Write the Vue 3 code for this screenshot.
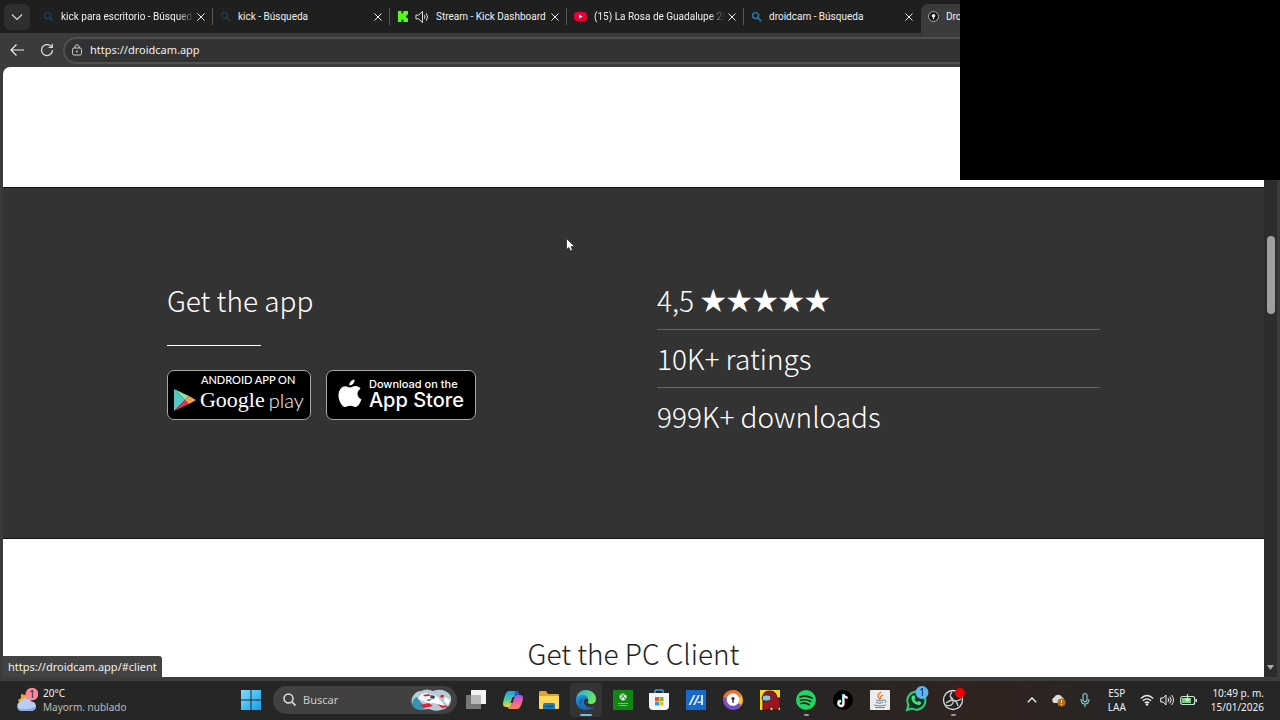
<template>
  <div class="screen">
    <!-- browser tabs -->
    <header class="tab-strip">
      <button class="tab-menu" aria-label="Tabs">
        <svg width="12" height="12" viewBox="0 0 12 12"><path d="M1 3.5 6 8.5 11 3.5" fill="none" stroke="#ddd" stroke-width="1.1" /></svg>
      </button>
      <div v-for="tab in tabs" :key="tab.title" class="tab" :class="{ active: tab.active }">
        <svg v-if="tab.icon === 'search'" class="favicon" :class="{ dim: tab.dim }" viewBox="0 0 12 12">
          <circle cx="5" cy="5" r="3.2" fill="none" stroke="#247fae" stroke-width="1.5" />
          <path d="M7.4 7.4 11 11" stroke="#247fae" stroke-width="1.7" />
        </svg>
        <svg v-else-if="tab.icon === 'kick'" class="favicon" viewBox="0 0 12 12">
          <path d="M1 0h4v3h1V2h1V0h5v4h-1v1h-1v2h1v1h1v4H7v-2H6V9H5v3H1z" fill="#53fc18" />
        </svg>
        <svg v-else-if="tab.icon === 'youtube'" class="favicon youtube" viewBox="0 0 14 12">
          <rect y="1" width="14" height="10" rx="3" fill="#e60035" />
          <path d="M5.5 3.8v4.4L9.3 6z" fill="#fff" />
        </svg>
        <svg v-else class="favicon" viewBox="0 0 12 12">
          <circle cx="6" cy="6" r="5.4" fill="#111" stroke="#bbb" />
          <circle cx="6" cy="5.2" r="2" fill="#eee" /><path d="M5.3 6h1.4v3H5.3z" fill="#eee" />
        </svg>
        <svg v-if="tab.sound" class="sound" viewBox="0 0 15 14">
          <path d="M1 5v4h3l4 4V1L4 5z" fill="none" stroke="#eee" />
          <path d="M10 5q1.500 2 0 4M12 3q3 4 0 8" fill="none" stroke="#eee" />
        </svg>
        <span class="tab-title" :class="{ fade: tab.fade }">{{ tab.title }}</span>
        <button class="tab-close" aria-label="Cerrar">
          <svg width="8" height="8" viewBox="0 0 8 8"><path d="M.5.5l7 7M7.500.5l-7 7" stroke="#eee" /></svg>
        </button>
      </div>
    </header>

    <!-- toolbar -->
    <div class="toolbar">
      <button class="tool" aria-label="Atrás">
        <svg width="14" height="12" viewBox="0 0 14 12"><path d="M14 6H1M6.500.5 1 6l5.500 5.500" fill="none" stroke="#eee" stroke-width="1.2" /></svg>
      </button>
      <button class="tool" aria-label="Actualizar">
        <svg width="14" height="14" viewBox="0 0 14 14">
          <path d="M12.500 7a5.500 5.500 0 1 1-2-4.200L12 4" fill="none" stroke="#ddd" stroke-width="1.2" />
          <path d="M12.300.8v3.700H8.500" fill="none" stroke="#ddd" stroke-width="1.2" />
        </svg>
      </button>
      <div class="address">
        <svg width="12" height="12" viewBox="0 0 12 12">
          <rect x="1.500" y="4" width="9" height="7" rx="1.500" fill="none" stroke="#ccc" />
          <path d="M3.800 4V3a2.200 2.200 0 0 1 4.400 0v1" fill="none" stroke="#ccc" />
          <circle cx="6" cy="7.500" r=".9" fill="#ccc" />
        </svg>
        <input v-model="url" type="text" aria-label="Dirección" />
      </div>
    </div>

    <!-- web page -->
    <div class="viewport">
      <main class="page">
        <section class="blank"></section>
        <section class="app-section">
          <div class="columns">
            <div class="get-app">
              <h2>Get the app</h2>
              <hr />
              <div class="badges">
                <a href="#" class="badge google">
                  <span class="badge-top">ANDROID APP ON</span>
                  <span class="google-row">
                    <svg width="22" height="24" viewBox="0 0 22 24">
                      <path d="M0 1v22l11-11z" fill="#55c8c4" />
                      <path d="M0 1l15 7-4 4z" fill="#8fe0a8" />
                      <path d="M0 23l15-7-4-4z" fill="#d8325f" />
                      <path d="M15 8l7 4-7 4-4-4z" fill="#f7a04b" />
                    </svg>
                    <span class="google-word">Google</span>
                    <span class="play-word">play</span>
                  </span>
                </a>
                <a href="#" class="badge apple">
                  <svg width="24" height="30" viewBox="0 0 24 30">
                    <path d="M16.500.5c.3 3-2.200 6-5.200 6C11 3.500 13.500 1 16.500.5z" fill="#fff" />
                    <path d="M12 8.500c1.500 0 3-1.500 5.500-1.500 2 0 4 1 5 2.700-4.500 2.800-3.700 8.800 1 10.600C22 24.500 20 28 17.500 28c-2 0-2.700-1.200-5.200-1.200S9 28 7 28C4 28 .5 22 .5 16.500.5 10.500 4 7.200 7.500 7.200c2 0 3.500 1.300 4.500 1.300z" fill="#fff" />
                  </svg>
                  <span class="apple-text">
                    <span class="apple-top">Download on the</span>
                    <span class="apple-word">App Store</span>
                  </span>
                </a>
              </div>
            </div>
            <ul class="stats">
              <li>4,5 <span class="stars">★★★★★</span></li>
              <li>10K+ ratings</li>
              <li>999K+ downloads</li>
            </ul>
          </div>
        </section>
        <section class="client">
          <h2>Get the PC Client</h2>
        </section>
      </main>
      <div class="scrollbar">
        <div class="thumb"></div>
        <svg class="down" width="7" height="5" viewBox="0 0 7 5"><path d="M0 0h7L3.500 5z" fill="#aaa" /></svg>
      </div>
      <div class="status">https://droidcam.app/#client</div>
    </div>

    <!-- taskbar -->
    <footer class="taskbar">
      <button class="weather">
        <svg width="22" height="26" viewBox="0 0 22 26">
          <path d="M2 13l3-2V7l4 1 4-3v12H4z" fill="#f6a623" />
          <path d="M5 24a5 5 0 0 1-.5-9.500 6 6 0 0 1 11 0A4.800 4.800 0 0 1 16 24z" fill="#b9cdf2" />
          <path d="M2 21q8 3 17-1-1 4-4 4H5q-2 0-3-3z" fill="#88a9e2" />
          <circle cx="16" cy="7" r="6.300" fill="#ff8796" />
          <text x="16" y="10.500" text-anchor="middle" font-size="10" fill="#222">1</text>
        </svg>
        <span class="two-lines"><span>20°C</span><span class="sky">Mayorm. nublado</span></span>
      </button>
      <button class="start" aria-label="Inicio">
        <svg width="20" height="20" viewBox="0 0 20 20">
          <defs><linearGradient id="win" x2="1" y2="1"><stop stop-color="#7de0fb" /><stop offset="1" stop-color="#159de9" /></linearGradient></defs>
          <path d="M0 0h9.500v9.500H0zM10.500 0H20v9.500h-9.500zM0 10.500h9.500V20H0zM10.500 10.500H20V20h-9.500z" fill="url(#win)" />
        </svg>
      </button>
      <label class="search">
        <svg width="13" height="13" viewBox="0 0 13 13"><circle cx="5.500" cy="5.500" r="4.500" fill="none" stroke="#ddd" stroke-width="1.500" /><path d="M9 9l3.500 3.500" stroke="#ddd" stroke-width="1.700" /></svg>
        <input type="text" placeholder="Buscar" aria-label="Buscar" />
        <svg class="doodle" width="42" height="22" viewBox="0 0 42 22">
          <path d="M1 15C-1 9 4 2 10 2q6-3 12 0 8-3 14 1 5 3 4 9-2 8-10 9-6 2-12-1Q4 22 1 15z" fill="#b5ccd7" />
          <path d="M1 15Q2 9 6 8l8 11-4 2Q3 21 1 15z" fill="#3993b3" />
          <path d="M7 10q2-6 8-6l9 2 5 4-10 5z" fill="#f4f5f8" />
          <path d="M12 6l6-1 2 1.500-6 1zM9 16l9-2 4 3-9 2zM25 14l4 0 9 4-7 1zM30 6l3 0-1 3-3-1z" fill="#d62436" />
          <path d="M19 13l6-4 5 3 4 5-8-2zM34 8l5 3-2 5-4-4z" fill="#fff" />
          <path d="M20 6l4 1-1 3-4-1zM15 11l6-1-3 2z" fill="#31445d" />
        </svg>
      </label>
      <nav class="apps">
        <button v-for="app in apps" :key="app.id" class="app" :class="{ current: app.current, running: app.running }" :aria-label="app.id">
          <svg width="24" height="24" viewBox="0 0 24 24">
            <template v-if="app.id === 'Vista de tareas'">
              <rect x="7" y="2" width="15" height="14" fill="#f1f1f1" /><rect x="2" y="7" width="15" height="14" fill="#777" /><rect x="7" y="7" width="10" height="9" fill="#b8b8b8" />
            </template>
            <template v-else-if="app.id === 'Copilot'">
              <defs>
                <linearGradient id="cpa" x2="0" y2="1"><stop stop-color="#1d9ff2" /><stop offset=".5" stop-color="#4cc8a0" /><stop offset="1" stop-color="#f3d03c" /></linearGradient>
                <linearGradient id="cpb" x2="0" y2="1"><stop stop-color="#a45bea" /><stop offset=".5" stop-color="#ee5fa0" /><stop offset="1" stop-color="#ff8b4a" /></linearGradient>
              </defs>
              <path d="M8 3h7q2 0 2.500 2l.5 2h-2q-2 0-3 3l-2 6q-1 3-3 3H5q-3 0-3-3 0-2 1.500-7Q5 3 8 3z" fill="url(#cpa)" />
              <path d="M16 7h3q3 0 3 3 0 2-1.500 6-1.500 5-4.500 5H9q-2 0-2.500-2H8q2 0 3-3l2-6q1-3 3-3z" fill="url(#cpb)" />
              <path d="M14 3h1q2 0 2.500 2l.5 2h-2q-2 0-3 3z" fill="#1c62d5" />
              <path d="M11.500 9h2l-2 6h-2z" fill="#262626" />
            </template>
            <template v-else-if="app.id === 'Explorador'">
              <path d="M2 4q0-1 1-1h6l2 3h10q1 0 1 1v13H2z" fill="#e1a52b" />
              <path d="M2 8h20v12q0 1-1 1H3q-1 0-1-1z" fill="#ffd75d" />
              <path d="M6 21v-4q0-2 2-2h8q2 0 2 2v4z" fill="#177bb8" /><path d="M8 18h8v1H8z" fill="#0a4f82" />
            </template>
            <template v-else-if="app.id === 'Edge'">
              <defs>
                <linearGradient id="eda" x2="1" y2=".4"><stop stop-color="#25a9e9" /><stop offset="1" stop-color="#6ce45d" /></linearGradient>
                <linearGradient id="edb" x2="1" y2="1"><stop stop-color="#2399e2" /><stop offset="1" stop-color="#1450a2" /></linearGradient>
              </defs>
              <path d="M2 11C3 5 7 2 12 2c6 0 10 4 10 9 0 3-2 5-5 5-2 0-4-1-3-2 1-3-1-6-5-6-3 0-6 1-7 3z" fill="url(#eda)" />
              <path d="M2 12c0-3 3-5 7-5 3 0 5 2 5 4-5-2-6 6 0 8 3 1 5 0 7-1-2 3-5 4-9 4C6 22 2 18 2 12z" fill="url(#edb)" />
              <path d="M10 11c-4 3-3 9 3 11-5-1-9-4-8-8 0-2 2-4 5-3z" fill="#1767b7" />
            </template>
            <template v-else-if="app.id === 'Xbox'">
              <rect x="2" y="2" width="20" height="20" fill="#138517" />
              <circle cx="12" cy="9" r="3.500" fill="#eaf4e9" /><path d="M9.500 12q.7-3.500 2.500-3.500t2.500 3.500M9.500 6.500q2 .5 2.500 1 1-1 2.500-1" fill="none" stroke="#138517" />
              <path d="M7 15.500h10M8 17.500h8" stroke="#7fbd80" />
            </template>
            <template v-else-if="app.id === 'Store'">
              <path d="M8 6V3q0-1 1-1h6q1 0 1 1v3" fill="none" stroke="#39a6dc" stroke-width="1.500" />
              <path d="M2 5h20v13q0 4-4 4H6q-4 0-4-4z" fill="#f3f4f5" />
              <path d="M8 9h4v4H8z" fill="#ef5135" /><path d="M12.500 9h4v4h-4z" fill="#80bb21" /><path d="M8 13.500h4v4H8z" fill="#20a4e8" /><path d="M12.500 13.500h4v4h-4z" fill="#fdb913" />
            </template>
            <template v-else-if="app.id === 'MyASUS'">
              <rect x="2" y="2" width="20" height="20" fill="#1769cc" />
              <path d="M4.500 17 9.500 7h2L6.500 17zM9 17l5-10h2l-5 10zM17 7h2v10h-2zM14 13.500h4V15h-5z" fill="#dcebfc" />
            </template>
            <template v-else-if="app.id === 'Navegador'">
              <path d="M12 2a10 10 0 0 1 10 10q0 7-7 9-2-6-3-19z" fill="#ffbd29" />
              <path d="M12 2A10 10 0 0 0 2 9l10 6 8-7q-2-5-8-6z" fill="#f26d35" />
              <path d="M2 9q-1 9 7 12.500 9 2 11-5L12 13z" fill="#7950c8" />
              <circle cx="12" cy="11.500" r="6.300" fill="#fff" /><circle cx="12" cy="10.500" r="1.600" fill="#35284f" /><path d="M11.300 11h1.400v4h-1.400z" fill="#35284f" />
            </template>
            <template v-else-if="app.id === 'Among Us'">
              <rect x="2" y="2" width="20" height="20" fill="#f6d62c" />
              <path d="M5 22V9q0-6 7-6 6 0 7 7h3v9h-2v3h-5v-3h-3v3z" fill="#9d1421" stroke="#3c1015" />
              <rect x="4" y="7" width="9" height="6" rx="3" fill="#8fc4d1" stroke="#263743" />
            </template>
            <template v-else-if="app.id === 'Spotify'">
              <circle cx="12" cy="12" r="10" fill="#1ed760" />
              <path d="M6 9q6-2 12 1M6.500 12.300q5-1.500 10 1M7 15.500q4-1 8 1" fill="none" stroke="#142018" stroke-width="1.700" stroke-linecap="round" />
            </template>
            <template v-else-if="app.id === 'TikTok'">
              <circle cx="12" cy="12" r="10" fill="#000" />
              <path d="M12 6v9a2.500 2.500 0 1 1-2.500-2.500M12 6q1 3 4 3" fill="none" stroke="#25dcd8" stroke-width="2" />
              <path d="M13 7v9a2.500 2.500 0 1 1-2.500-2.500M13 7q1 3 4 3" fill="none" stroke="#ef3157" stroke-width="1.800" />
              <path d="M12.500 6.500v9A2.500 2.500 0 1 1 10 13M12.500 6.500q1 3 4 3" fill="none" stroke="#fff" stroke-width="1.800" />
            </template>
            <template v-else-if="app.id === 'Java'">
              <rect x="2" y="2" width="20" height="20" rx="1" fill="#ececec" />
              <path d="M13 4q-5 4-2 6l1 2M15 7q-4 2-2 4" fill="none" stroke="#ea7b33" stroke-width="1.300" />
              <path d="M8 12q4 2 8 0M8 14.500q4 1.500 7 0M6 17q6 2 12 0M7 19.500h10M16 12q3 0 1 3" fill="none" stroke="#63869f" />
            </template>
            <template v-else-if="app.id === 'WhatsApp'">
              <path d="M3 22l1.500-5A9 9 0 1 1 8 20.500z" fill="#183226" stroke="#2fd276" stroke-width="2" />
              <path d="M8.500 7.500l2 0 1 2.500-1 1.500q1 2 3 2.500l1.500-1 2.200 1.200q-.2 3-3 2.800-5-1-6.700-5.500-.5-2.800 1-4z" fill="#45df82" />
              <circle cx="18" cy="4.500" r="6.500" fill="#5db7ee" /><text x="18" y="8" text-anchor="middle" font-size="10" fill="#14202a">1</text>
            </template>
            <template v-else>
              <circle cx="12" cy="12" r="9.500" fill="#222" stroke="#ddd" stroke-width="1.300" />
              <path d="M11 4q-4 5 1 8 4 2 8-1M5 17q5 2 7-2 1-4-3-7M17 18q-1-5-5-6-3 0-7 3" fill="none" stroke="#ccc" stroke-width="1.300" />
              <circle cx="19" cy="5" r="5" fill="#f00000" />
            </template>
          </svg>
        </button>
      </nav>
      <div class="tray">
        <svg width="10" height="6" viewBox="0 0 10 6"><path d="M.8 5.300 5 1l4.200 4.300" fill="none" stroke="#eee" stroke-width="1.300" /></svg>
        <svg width="15" height="14" viewBox="0 0 15 14">
          <path d="M3 10a3 3 0 0 1 0-5.500A4.500 4.500 0 0 1 11 4q2 1 2 3l-5 3z" fill="#ddd" />
          <circle cx="10.500" cy="9.500" r="4" fill="#b96d15" /><path d="M10.500 7v3M10.500 11v1" stroke="#fff" />
        </svg>
        <svg width="10" height="14" viewBox="0 0 10 14">
          <rect x="3" y=".7" width="4" height="8" rx="2" fill="none" stroke="#7ccbcb" stroke-width="1.200" /><path d="M1 6q0 5 4 5t4-5M5 11v3" fill="none" stroke="#7ccbcb" stroke-width="1.200" />
        </svg>
        <span class="two-lines lang"><span>ESP</span><span>LAA</span></span>
        <button class="quick" aria-label="Red, volumen y batería">
          <svg width="14" height="12" viewBox="0 0 14 12">
            <path d="M.8 4.500q6.200-6 12.400 0M2.800 6.800q4.200-4 8.400 0M4.800 9q2.200-2 4.400 0" fill="none" stroke="#eee" stroke-width="1.200" /><circle cx="7" cy="10.500" r="1.200" fill="#eee" />
          </svg>
          <svg width="14" height="12" viewBox="0 0 14 12">
            <path d="M.7 4v4h2.500L6 11V1L3.200 4z" fill="none" stroke="#eee" /><path d="M8 4q1.500 2 0 4M9.700 2.500q3 3.500 0 7M11.500 1q4 5 0 10" fill="none" stroke="#eee" />
          </svg>
          <svg width="17" height="12" viewBox="0 0 17 12">
            <rect x=".7" y="2.500" width="14" height="8" rx="2" fill="none" stroke="#c9e8cf" stroke-width="1.200" /><rect x="2" y="4" width="9" height="5" fill="#80c88a" /><path d="M16.200 5v3" stroke="#ddd" stroke-width="1.500" /><path d="M7.500 0v7M5 4.500 7.500 7 10 4.500" fill="none" stroke="#c8f1cc" stroke-width="1.200" />
          </svg>
        </button>
        <span class="two-lines clock"><span>10:49 p. m.</span><span>15/01/2026</span></span>
      </div>
    </footer>

    <div class="overlay"></div>
    <svg class="cursor" width="10" height="14" viewBox="0 0 10 14"><path d="M.5.5v11l2.500-2 1.500 3.500 2-1L5 8.500h3.500z" fill="#fff" stroke="#222" stroke-width=".7" /></svg>
  </div>
</template>

<script setup>
import { ref } from 'vue';

const url = ref('https://droidcam.app');

const tabs = [
  { title: 'kick para escritorio - Búsqueda', icon: 'search', dim: true, fade: true },
  { title: 'kick - Búsqueda', icon: 'search', dim: true },
  { title: 'Stream - Kick Dashboard', icon: 'kick', sound: true },
  { title: '(15) La Rosa de Guadalupe 2026', icon: 'youtube', fade: true },
  { title: 'droidcam - Búsqueda', icon: 'search' },
  { title: 'DroidCam', icon: 'droidcam', active: true },
];

const apps = [
  { id: 'Vista de tareas' },
  { id: 'Copilot' },
  { id: 'Explorador' },
  { id: 'Edge', current: true },
  { id: 'Xbox' },
  { id: 'Store' },
  { id: 'MyASUS' },
  { id: 'Navegador' },
  { id: 'Among Us' },
  { id: 'Spotify', running: true },
  { id: 'TikTok' },
  { id: 'Java' },
  { id: 'WhatsApp' },
  { id: 'OBS', running: true },
];
</script>

<style>
body {
  margin: 0;
  background: #1f1f1f;
}
</style>

<style scoped>
* {
  box-sizing: border-box;
}

.screen {
  position: relative;
  display: flex;
  flex-direction: column;
  height: 100vh;
  overflow: hidden;
  background: #3b3b3b;
  color: #f0f0f0;
  font: 11px/14px "Noto Sans", "Open Sans", sans-serif;
}

button,
input {
  margin: 0;
  padding: 0;
  border: 0;
  outline: 0;
  background: none;
  color: inherit;
  font: inherit;
}

svg {
  flex: none;
  display: block;
}

/* tabs */
.tab-strip {
  display: flex;
  flex: none;
  height: 33px;
  padding-left: 4px;
  background: #1f1f1f;
  overflow: hidden;
  font-family: Roboto, "Open Sans", sans-serif;
  font-size: 10px;
}

.tab-menu {
  display: grid;
  place-items: center;
  flex: none;
  width: 26px;
  height: 26px;
  margin: 4px 6px 0 0;
  border-radius: 6px;
  background: #2f2f2f;
}

.tab {
  position: relative;
  display: flex;
  align-items: center;
  flex: none;
  width: 177px;
  padding: 0 8px 0 7px;
}

.tab:not(.active)::after {
  content: "";
  position: absolute;
  right: 0;
  top: 8px;
  width: 1px;
  height: 17px;
  background: #5a5a5a;
}

.tab:nth-last-child(2)::after {
  display: none;
}

.tab.active {
  margin-top: 4px;
  padding-bottom: 4px;
  border-radius: 7px 7px 0 0;
  background: #3b3b3b;
}

.favicon {
  width: 11px;
  height: 11px;
  margin-right: 7px;
}

.favicon.youtube {
  width: 13px;
}

.favicon.dim {
  opacity: 0.3;
}

.sound {
  width: 14px;
  height: 14px;
  margin-right: 7px;
}

.tab-title {
  flex: 1;
  overflow: hidden;
  white-space: nowrap;
}

.tab-title.fade {
  mask-image: linear-gradient(90deg, #000 88%, transparent);
}

.tab-close {
  margin-left: 3px;
}

/* toolbar */
.toolbar {
  display: flex;
  align-items: center;
  flex: none;
  height: 34px;
  padding: 0 4px 0 9px;
}

.tool {
  display: grid;
  place-items: center;
  width: 16px;
  margin-right: 14px;
}

.address {
  display: flex;
  align-items: center;
  flex: 1;
  height: 27px;
  margin-left: -6px;
  padding-left: 6px;
  border: 2px solid #505050;
  border-radius: 14px;
  background: #323232;
}

.address input {
  flex: 1;
  margin-left: 7px;
}

/* page */
.viewport {
  position: relative;
  display: flex;
  flex: 1;
  min-height: 0;
  margin-left: 3px;
  padding-right: 3px;
}

.page {
  flex: 1;
  overflow: hidden;
  border-radius: 7px 0 0 0;
  background: #fff;
  font-family: "Noto Sans CJK SC", "Open Sans", sans-serif;
  font-weight: 300;
}

.blank {
  height: 120px;
}

.app-section {
  height: 352px;
  padding-top: 84px;
  border: solid #111;
  border-width: 1px 0;
  background: #333;
  color: #fff;
}

.columns {
  display: grid;
  grid-template-columns: 1fr 1fr;
  gap: 47px;
  width: 74%;
  margin: 0 auto;
}

h2 {
  margin: 0;
  font-size: 28px;
  font-weight: 300;
  line-height: 36px;
}

.get-app {
  padding-top: 10px;
}

hr {
  width: 94px;
  height: 1px;
  margin: 27px 0 24px;
  border: 0;
  background: #fff;
}

.badges {
  display: flex;
  gap: 15px;
}

.badge {
  height: 50px;
  border: 1px solid #a6a6a6;
  border-radius: 7px;
  background: #000;
  color: #fff;
  text-decoration: none;
  white-space: nowrap;
}

.google {
  width: 144px;
  padding: 3px 0 0 6px;
}

.badge-top {
  display: block;
  padding-left: 27px;
  font: 500 11px/12px Lato, sans-serif;
}

.google-row {
  display: flex;
  align-items: center;
  height: 28px;
}

.google-word {
  margin-left: 4px;
  font: 22px/28px "Liberation Serif", serif;
}

.play-word {
  margin-left: 4px;
  font: 300 20px/28px Lato, sans-serif;
}

.apple {
  display: flex;
  align-items: center;
  width: 150px;
  padding: 0 0 2px 11px;
}

.apple-text {
  display: flex;
  flex-direction: column;
  margin-left: 7px;
}

.apple-top {
  font: 500 11px/12px Inter, sans-serif;
}

.apple-word {
  font: 500 20px/20px Inter, sans-serif;
}

.stats {
  margin: 0;
  padding: 0;
  list-style: none;
  font-size: 28px;
  line-height: 36px;
}

.stats li {
  padding: 10px 0 11px;
  border-bottom: 1px solid #666;
}

.stats li:last-child {
  border-bottom: 0;
}

.stars {
  font-size: 26px;
  line-height: 26px;
  vertical-align: 2px;
}

.client {
  padding-top: 96px;
  color: #222;
  text-align: center;
}

.scrollbar {
  display: flex;
  flex-direction: column;
  align-items: center;
  width: 13px;
  background: #2c2c2c;
}

.thumb {
  width: 8px;
  height: 78px;
  margin-top: 169px;
  border-radius: 4px;
  background: #a0a0a0;
}

.down {
  margin: auto 0 7px;
}

.status {
  position: absolute;
  left: 0;
  bottom: 0;
  padding: 4px 5px 3px;
  border-radius: 0 3px 0 0;
  background: #424242;
}

/* taskbar */
.taskbar {
  display: flex;
  align-items: center;
  flex: none;
  height: 43px;
  padding-bottom: 2px;
  border-top: 4px solid #3c3c3c;
  background: linear-gradient(90deg, #262626 60%, #30231f 78%, #262626 88%);
}

.two-lines {
  display: flex;
  flex-direction: column;
  font-size: 10px;
  line-height: 14px;
}

.weather {
  display: flex;
  align-items: center;
  gap: 5px;
  width: 241px;
  padding-left: 16px;
  text-align: left;
}

.sky {
  color: #bbb;
}

.search {
  display: flex;
  align-items: center;
  width: 184px;
  height: 28px;
  margin-left: 12px;
  padding: 0 4px 0 10px;
  border-radius: 14px;
  background: #414141;
}

.search input {
  flex: 1;
  min-width: 0;
  margin-left: 7px;
}

.search input::placeholder {
  color: #ccc;
  opacity: 1;
}

.apps {
  display: flex;
  justify-content: space-between;
  width: 509px;
  margin-left: 3px;
}

.app {
  position: relative;
  display: grid;
  place-items: center;
  width: 32px;
  height: 34px;
  border-radius: 4px;
}

.app svg {
  overflow: visible;
}

.app.current {
  background: #343434;
}

.app.current::after,
.app.running::after {
  content: "";
  position: absolute;
  bottom: 1px;
  left: 14px;
  width: 5px;
  height: 2px;
  border-radius: 1px;
  background: #999;
}

.app.current::after {
  left: 10px;
  width: 12px;
  background: #69bfe9;
}

.tray {
  display: flex;
  align-items: center;
  gap: 14px;
  margin-left: auto;
  padding-right: 16px;
}

.lang {
  align-items: center;
  margin-left: 4px;
}

.quick {
  display: flex;
  gap: 6px;
}

.clock {
  align-items: flex-end;
}

.overlay {
  position: absolute;
  top: 0;
  right: 0;
  width: 25%;
  height: 180px;
  background: #000;
}

.cursor {
  position: absolute;
  left: 566px;
  top: 238px;
}
</style>
